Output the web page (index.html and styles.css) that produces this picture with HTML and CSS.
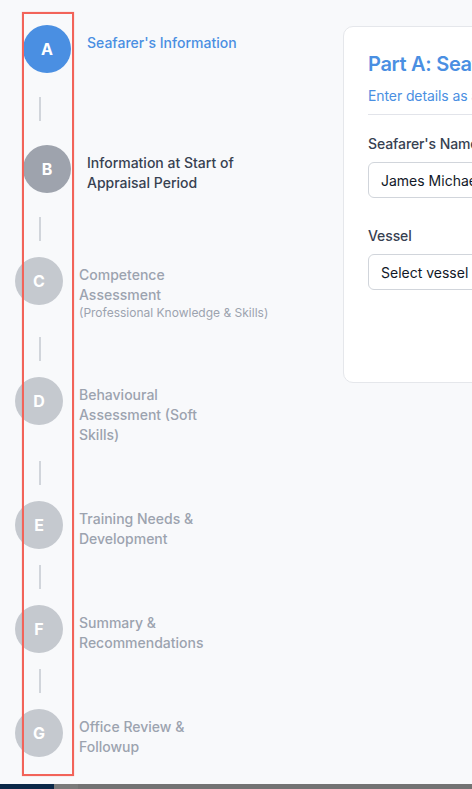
FILE: index.html
```html
<!DOCTYPE html>
<html lang="en">
<head>
<meta charset="utf-8">
<title>Seafarer Appraisal</title>
<link rel="stylesheet" href="styles.css">
</head>
<body>
<div class="page">
  <div class="layout">
    <nav class="stepper">
      <div class="step step-done step-active">
        <div class="circle">A</div>
        <div class="label">Seafarer's Information</div>
      </div>
      <div class="connector"></div>
      <div class="step step-done step-current">
        <div class="circle">B</div>
        <div class="label">Information at Start of Appraisal Period</div>
      </div>
      <div class="connector"></div>
      <div class="step">
        <div class="circle">C</div>
        <div class="label">Competence Assessment<span class="sub">(Professional Knowledge &amp; Skills)</span></div>
      </div>
      <div class="connector"></div>
      <div class="step">
        <div class="circle">D</div>
        <div class="label">Behavioural Assessment (Soft Skills)</div>
      </div>
      <div class="connector"></div>
      <div class="step">
        <div class="circle">E</div>
        <div class="label">Training Needs &amp; Development</div>
      </div>
      <div class="connector"></div>
      <div class="step">
        <div class="circle">F</div>
        <div class="label">Summary &amp; Recommendations</div>
      </div>
      <div class="connector"></div>
      <div class="step">
        <div class="circle">G</div>
        <div class="label">Office Review &amp; Followup</div>
      </div>
      <div class="highlight"></div>
    </nav>
    <main class="content">
      <section class="card">
        <h1 class="card-title">Part A: Seafarer's Information</h1>
        <p class="card-sub">Enter details as applicable at the start of the appraisal</p>
        <div class="field">
          <label class="field-label">Seafarer's Name</label>
          <div class="input">James Michael Anderson</div>
        </div>
        <div class="field">
          <label class="field-label">Vessel</label>
          <div class="input">Select vessel</div>
        </div>
      </section>
    </main>
  </div>
  <div class="bottom-bar">
    <div class="bb-navy"></div>
    <div class="bb-mid"></div>
    <div class="bb-rest"></div>
  </div>
</div>
</body>
</html>
```
FILE: styles.css
```css
* { box-sizing: border-box; }
html, body {
  margin: 0;
  padding: 0;
  height: 100%;
  overflow: hidden;
}
body {
  background: #f8f9fb;
  font-family: Inter, "Noto Sans", "Liberation Sans", sans-serif;
  color: #374151;
}
.page {
  height: 100vh;
  display: flex;
  flex-direction: column;
}
.layout {
  flex: 1;
  display: flex;
  min-height: 0;
}
.stepper {
  position: relative;
  width: 343px;
  flex-shrink: 0;
  padding: 17px 0 0 15px;
  display: flex;
  flex-direction: column;
}
.step {
  display: flex;
  align-items: flex-start;
  gap: 16px;
}
.step-done {
  padding: 8px 0 8px 8px;
}
.circle {
  width: 48px;
  height: 48px;
  border-radius: 50%;
  flex-shrink: 0;
  background: #c5c9cf;
  color: #fff;
  font-weight: 700;
  font-size: 16px;
  display: flex;
  align-items: center;
  justify-content: center;
}
.step-active .circle { background: #4a8fe2; }
.step-current .circle { background: #9ea3ad; }
.label {
  margin-top: 8px;
  width: 150px;
  font-size: 14px;
  line-height: 20px;
  font-weight: 500;
  color: #9ca3af;
}
.step-active .label { color: #4a8fe2; width: 170px; }
.step-current .label { color: #374151; }
.sub {
  display: block;
  font-size: 12px;
  line-height: 16px;
  font-weight: 400;
  white-space: nowrap;
}
.connector {
  width: 2px;
  height: 24px;
  margin: 16px 0 16px 24px;
  background: #d1d5db;
}
.highlight {
  position: absolute;
  left: 22px;
  top: 12px;
  width: 52px;
  height: 764px;
  border: 2px solid #f26359;
  box-shadow: 0 0 1px rgba(242, 99, 89, 0.5);
  pointer-events: none;
}
.content {
  padding-top: 26px;
  flex-shrink: 0;
}
.card {
  width: 600px;
  background: #fff;
  border: 1px solid #e5e7eb;
  border-radius: 10px;
  padding: 23px 23px 92px 24px;
}
.card-title {
  margin: 0;
  font-size: 20px;
  line-height: 28px;
  font-weight: 600;
  letter-spacing: -0.3px;
  color: #4a8fe2;
}
.card-sub {
  margin: 8px 0 0;
  padding-bottom: 8px;
  border-bottom: 1px solid #e2e4ea;
  font-size: 14px;
  line-height: 20px;
  letter-spacing: -0.1px;
  color: #4a8fe2;
}
.field {
  margin-top: 19px;
}
.field + .field { margin-top: 28px; }
.field-label {
  display: block;
  font-size: 14px;
  line-height: 20px;
  font-weight: 500;
  letter-spacing: -0.1px;
  color: #374151;
  margin-bottom: 8px;
}
.input {
  height: 36px;
  border: 1px solid #d1d5db;
  border-radius: 6px;
  padding: 0 12px;
  display: flex;
  align-items: center;
  font-size: 14px;
  color: #111827;
  background: #fff;
  white-space: nowrap;
}
.bottom-bar {
  height: 5px;
  display: flex;
  flex-shrink: 0;
}
.bb-navy { width: 54px; background: #0b2848; }
.bb-mid { width: 24px; background: #7a7a7a; }
.bb-rest { flex: 1; background: #737373; }
```
